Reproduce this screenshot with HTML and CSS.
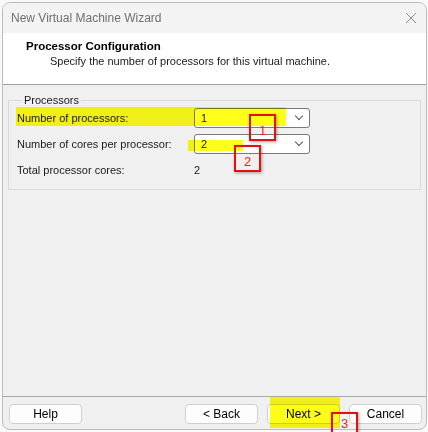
FILE: index.html
```html
<!DOCTYPE html>
<html lang="en">
<head>
    <meta charset="UTF-8">
    <title>New Virtual Machine Wizard</title>
    <link rel="stylesheet" href="styles.css">
</head>
<body>
    <div class="dialog">
        <div class="title-bar">
            <span class="title">New Virtual Machine Wizard</span>
            <svg class="close" width="12" height="12" viewBox="0 0 12 12">
                <path d="M1 1 L11 11 M11 1 L1 11" stroke="#8a8a8a" stroke-width="1" fill="none"/>
            </svg>
        </div>

        <div class="header">
            <h1>Processor Configuration</h1>
            <p>Specify the number of processors for this virtual machine.</p>
        </div>

        <div class="body">
            <fieldset class="group">
                <legend>Processors</legend>
                <div class="row">
                    <span class="label">Number of processors:</span>
                    <div class="select"><span>1</span><span class="chevron"></span></div>
                </div>
                <div class="row">
                    <span class="label">Number of cores per processor:</span>
                    <div class="select"><span>2</span><span class="chevron"></span></div>
                </div>
                <div class="row total">
                    <span class="label">Total processor cores:</span>
                    <span class="value">2</span>
                </div>
            </fieldset>
        </div>

        <div class="footer">
            <button class="btn">Help</button>
            <div class="nav">
                <button class="btn">&lt; Back</button>
                <button class="btn">Next &gt;</button>
                <button class="btn">Cancel</button>
            </div>
        </div>
    </div>

    <!-- screenshot annotations -->
    <div class="mark hl hl-1"></div>
    <div class="mark hl hl-2"></div>
    <div class="mark hl hl-3"></div>
    <div class="mark box box-1">1</div>
    <div class="mark box box-2">2</div>
    <div class="mark box box-3">3</div>
</body>
</html>
```

FILE: styles.css
```css
* {
    margin: 0;
    padding: 0;
    box-sizing: border-box;
}

body {
    font-family: 'Liberation Sans', Arial, sans-serif;
    font-size: 11px;
    color: #1a1a1a;
    background: #f9f9f9;
    width: 428px;
    height: 432px;
    position: relative;
    overflow: hidden;
    padding: 2px 1px 0 2px;
}

.dialog {
    width: 425px;
    height: 428px;
    border: 1px solid #bcbcbc;
    border-radius: 8px;
    overflow: hidden;
    display: flex;
    flex-direction: column;
    background: #f0f0f0;
}

.title-bar {
    height: 30px;
    background: #f3f3f3;
    display: flex;
    align-items: center;
    justify-content: space-between;
    padding: 0 8px 1px 8px;
}

.title {
    color: #6f6f6f;
    font-size: 12px;
}

.close {
    margin-right: 1px;
}

.header {
    height: 52px;
    background: #fff;
    padding: 6px 0 0 23px;
    border-bottom: 1px solid #a0a0a0;
}

.header h1 {
    font-size: 11.5px;
    font-weight: 700;
    line-height: 14px;
    color: #000;
}

.header p {
    padding-left: 24px;
    line-height: 14px;
    margin-top: 1px;
    color: #1a1a1a;
}

.body {
    flex: 1;
    padding: 8px 5px 0 5px;
}

.group {
    border: 1px solid #dadada;
    height: 97px;
    padding: 0 0 0 8px;
}

.group legend {
    margin-left: 5px;
    padding: 0 2px;
    line-height: 14px;
}

.row {
    display: flex;
    align-items: center;
    height: 20px;
    margin-bottom: 6px;
}

.row:first-of-type {
    margin-top: 1px;
}

.label {
    width: 177px;
}

.select {
    width: 116px;
    height: 20px;
    background: #fff;
    border: 1px solid #7a7a7a;
    border-radius: 3px;
    display: flex;
    align-items: center;
    justify-content: space-between;
    padding: 0 7px 0 6px;
}

.chevron {
    width: 6px;
    height: 6px;
    border-right: 1px solid #555;
    border-bottom: 1px solid #555;
    transform: rotate(45deg);
    margin-top: -4px;
}

.total {
    margin-top: 3px;
}

.footer {
    height: 33px;
    border-top: 1px solid #a9a9a9;
    display: flex;
    justify-content: space-between;
    padding: 7px 4px 0 6px;
}

.nav {
    display: flex;
    gap: 9px;
}

.btn {
    font-family: inherit;
    font-size: 12px;
    color: #000;
    width: 73px;
    height: 20px;
    background: #fdfdfd;
    border: 1px solid #cfcfcf;
    border-radius: 4px;
}

/* annotations drawn over the screenshot */
.mark {
    position: absolute;
}

.hl {
    background: #ffff00;
    mix-blend-mode: multiply;
    opacity: 0.9;
}

.hl-1 { left: 16px; top: 107px; width: 270px; height: 19px; }
.hl-2 { left: 188px; top: 140px; width: 55px; height: 11px; }
.hl-3 { left: 270px; top: 397px; width: 70px; height: 31px; }

.box {
    width: 27px;
    height: 27px;
    border: 2px solid #e41010;
    box-shadow: 1px 1px 3px rgba(0, 0, 0, 0.35);
    color: #ff1a1a;
    font-size: 13px;
    text-align: center;
    line-height: 14px;
    padding-top: 8px;
}

.box-1 { left: 249px; top: 114px; }
.box-2 { left: 234px; top: 145px; }
.box-3 { left: 331px; top: 412px; height: 24px; padding-top: 3px; }
```
